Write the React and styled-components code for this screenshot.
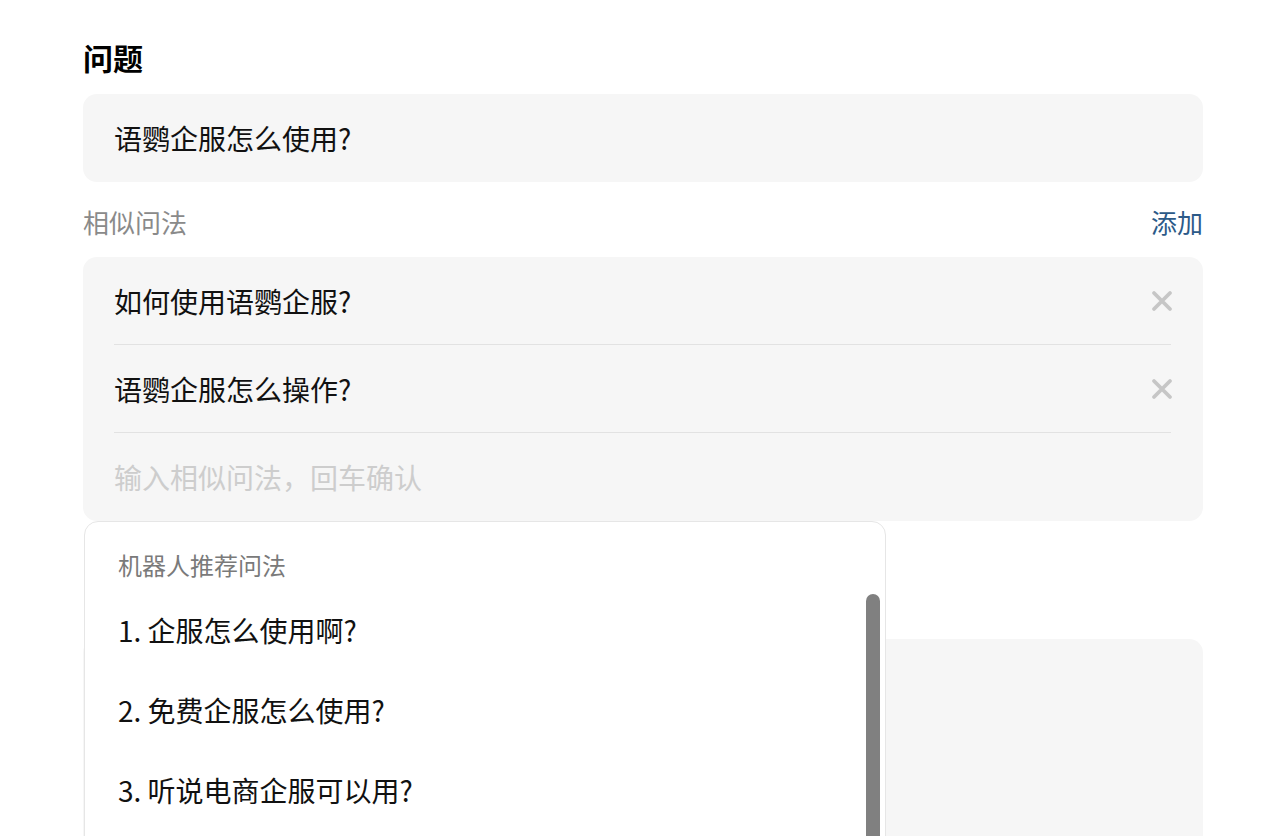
import React from 'react';
import styled, { createGlobalStyle } from 'styled-components';

const GlobalStyle = createGlobalStyle`
  html, body {
    margin: 0;
    background: #fff;
    font-family: "Noto Sans CJK SC", "Noto Sans", sans-serif;
    color: #111;
    overflow: hidden;
  }
`;

const similar = ['如何使用语鹦企服?', '语鹦企服怎么操作?'];
const suggestions = ['企服怎么使用啊?', '免费企服怎么使用?', '听说电商企服可以用?'];

const CloseIcon = () => (
  <svg width='22' height='22' viewBox='0 0 22 22'>
    <path
      d='M3 3 L19 19 M19 3 L3 19'
      stroke='#c6c6c6'
      strokeWidth='3.8'
      strokeLinecap='round'
    />
  </svg>
);

export const App = () => {
  return (
    <>
      <GlobalStyle />
      <Page>
        <Title>问题</Title>
        <Box>
          <Row>语鹦企服怎么使用?</Row>
        </Box>

        <LabelRow>
          <Label>相似问法</Label>
          <AddLink>添加</AddLink>
        </LabelRow>

        <Field>
          <Box>
            {similar.map((q) => (
              <Row key={q} divided>
                <span>{q}</span>
                <CloseButton>
                  <CloseIcon />
                </CloseButton>
              </Row>
            ))}
            <Row placeholder>输入相似问法，回车确认</Row>
          </Box>

          <Dropdown>
            <DropTitle>机器人推荐问法</DropTitle>
            <DropList>
              {suggestions.map((s, i) => (
                <DropItem key={s}>
                  {i + 1}. {s}
                </DropItem>
              ))}
            </DropList>
            <ScrollThumb />
          </Dropdown>
        </Field>

        <AnswerSection>
          <Box tall />
        </AnswerSection>
      </Page>
    </>
  );
};

const Page = styled.div`
  width: 1120px;
  margin-left: 83px;
  padding-top: 37px;
`;

const Title = styled.h1`
  margin: 0 0 17px;
  font-size: 30px;
  line-height: 40px;
  font-weight: 700;
  color: #000;
`;

const Box = styled.div`
  background: #f6f6f6;
  border-radius: 14px;
  padding: 0 32px 0 31px;
  height: ${(p) => (p.tall ? '400px' : 'auto')};
`;

const Row = styled.div`
  height: 88px;
  display: flex;
  align-items: center;
  justify-content: space-between;
  font-size: 28px;
  color: ${(p) => (p.placeholder ? '#cdcdcd' : '#111')};
  border-bottom: ${(p) => (p.divided ? '1px solid #e2e2e2' : 'none')};
  box-sizing: border-box;
`;

const CloseButton = styled.span`
  display: flex;
  align-items: center;
  margin-right: -2px;
`;

const LabelRow = styled.div`
  display: flex;
  justify-content: space-between;
  align-items: center;
  height: 40px;
  margin: 19px 0 16px;
`;

const Label = styled.span`
  font-size: 26px;
  color: #8a8a8a;
`;

const AddLink = styled.span`
  font-size: 26px;
  color: #2c5a88;
`;

const Field = styled.div`
  position: relative;
`;

const Dropdown = styled.div`
  position: absolute;
  top: 100%;
  left: 1px;
  width: 802px;
  height: 420px;
  background: #fff;
  border: 1px solid #e6e6e6;
  border-radius: 14px;
  box-sizing: border-box;
  padding: 27px 0 0 33px;
  z-index: 2;
`;

const DropTitle = styled.div`
  font-size: 24px;
  line-height: 32px;
  color: #7a7a7a;
`;

const DropList = styled.ul`
  list-style: none;
  margin: 9px 0 0;
  padding: 0;
`;

const DropItem = styled.li`
  height: 80px;
  display: flex;
  align-items: center;
  font-size: 28px;
  color: #111;
`;

const ScrollThumb = styled.div`
  position: absolute;
  top: 72px;
  right: 5px;
  width: 14px;
  height: 400px;
  border-radius: 7px;
  background: #808080;
`;

const AnswerSection = styled.div`
  margin-top: 118px;
`;

export default App;
